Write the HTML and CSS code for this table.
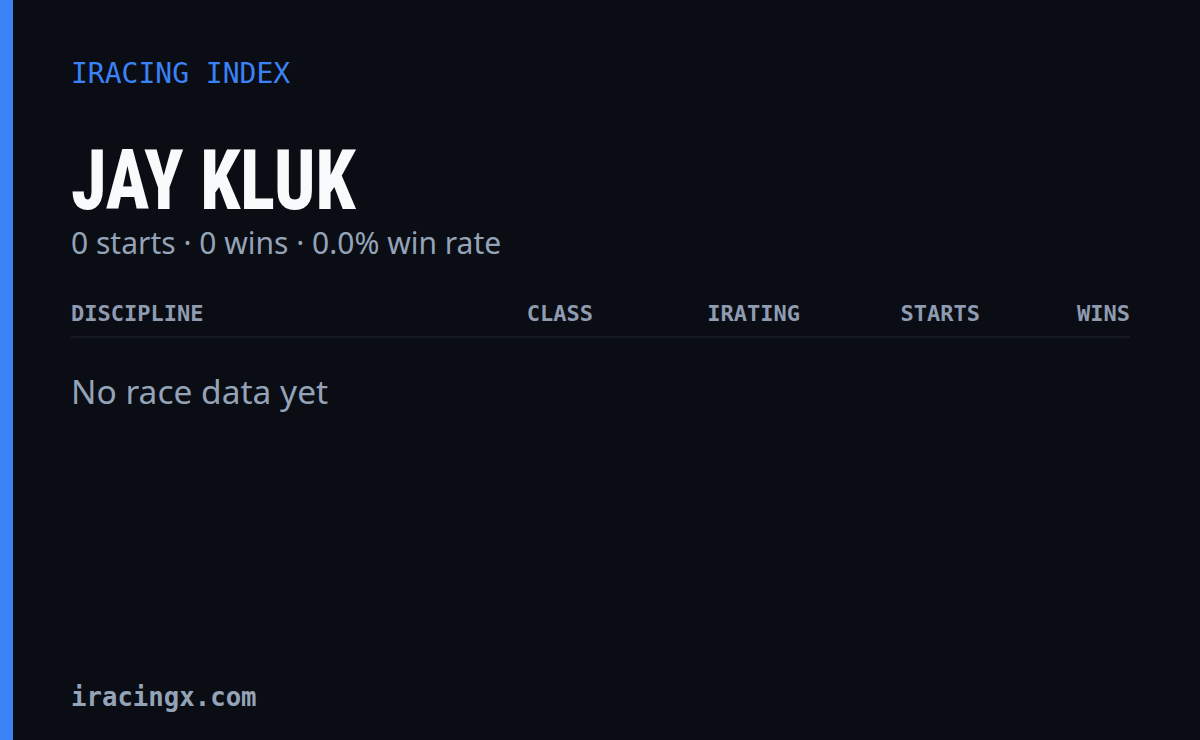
FILE: index.html
```html
<!DOCTYPE html>
<html>
<head>
<meta charset="utf-8">
<link rel="stylesheet" href="styles.css">
</head>
<body>
<div class="card">
  <div class="brand">IRACING INDEX</div>
  <h1 class="name"><span class="name-inner">JAY KLUK</span></h1>
  <div class="summary">0 starts · 0 wins · 0.0% win rate</div>
  <div class="table">
    <div class="thead">
      <div class="th th-disc">DISCIPLINE</div>
      <div class="th">CLASS</div>
      <div class="th">IRATING</div>
      <div class="th">STARTS</div>
      <div class="th">WINS</div>
    </div>
    <div class="empty">No race data yet</div>
  </div>
  <div class="footer">iracingx.com</div>
</div>
</body>
</html>
```

FILE: styles.css
```css
html, body {
  margin: 0;
  padding: 0;
  background: #0a0d14;
}
.card {
  box-sizing: border-box;
  width: 1200px;
  height: 740px;
  border-left: 13px solid #3b82f6;
  padding: 56px 70px 0 58px;
  display: flex;
  flex-direction: column;
  background: #0a0d14;
}
.brand {
  font-family: "DejaVu Sans Mono", monospace;
  font-size: 28px;
  line-height: 36px;
  color: #3b82f6;
}
.name {
  margin: 46px 0 0 0;
  font-family: "Roboto", sans-serif;
  font-stretch: condensed;
  font-weight: 800;
  font-size: 84px;
  line-height: 86px;
  color: #f8fafc;
  white-space: nowrap;
}
.name-inner {
  display: inline-block;
  transform: scaleX(0.86);
  transform-origin: left center;
}
.summary {
  font-family: "Noto Sans", sans-serif;
  font-size: 30px;
  line-height: 38px;
  color: #94a3b8;
}
.table {
  margin-top: 39px;
}
.thead {
  display: grid;
  grid-template-columns: 1fr 140px 207px 180px 150px;
  border-bottom: 2px solid #161a24;
  padding-bottom: 9px;
}
.th {
  font-family: "DejaVu Sans Mono", monospace;
  font-weight: 700;
  font-size: 22px;
  line-height: 26px;
  color: #8f9bb0;
  text-align: right;
}
.th-disc {
  text-align: left;
}
.empty {
  margin-top: 31px;
  font-family: "Noto Sans", sans-serif;
  font-size: 33.5px;
  line-height: 44px;
  color: #94a3b8;
}
.footer {
  margin-top: auto;
  margin-bottom: 26px;
  font-family: "DejaVu Sans Mono", monospace;
  font-weight: 700;
  font-size: 25.7px;
  line-height: 34px;
  color: #94a3b8;
}
```
